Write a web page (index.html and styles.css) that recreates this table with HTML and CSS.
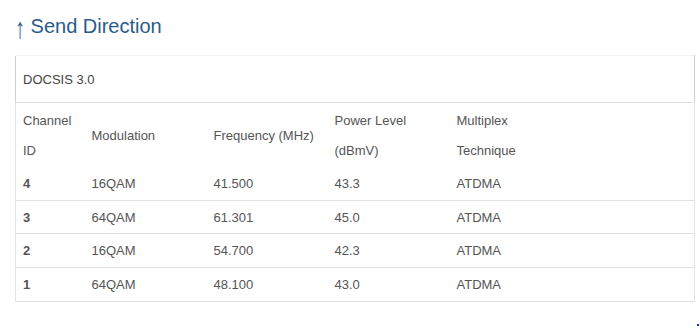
FILE: index.html
```html
<!DOCTYPE html>
<html>
<head>
<meta charset="utf-8">
<link rel="stylesheet" href="styles.css">
</head>
<body>
<div class="page">
  <h2 class="title"><span class="arrow">↑</span> Send Direction</h2>
  <table class="data">
    <colgroup>
      <col class="c1"><col class="c2"><col class="c3"><col class="c4"><col class="c5">
    </colgroup>
    <thead>
      <tr class="caption-row"><th colspan="5">DOCSIS 3.0</th></tr>
      <tr class="head-row">
        <th>Channel<br>ID</th>
        <th>Modulation</th>
        <th>Frequency (MHz)</th>
        <th>Power Level<br>(dBmV)</th>
        <th>Multiplex<br>Technique</th>
      </tr>
    </thead>
    <tbody>
      <tr><td class="id">4</td><td>16QAM</td><td>41.500</td><td>43.3</td><td>ATDMA</td></tr>
      <tr><td class="id">3</td><td>64QAM</td><td>61.301</td><td>45.0</td><td>ATDMA</td></tr>
      <tr><td class="id">2</td><td>16QAM</td><td>54.700</td><td>42.3</td><td>ATDMA</td></tr>
      <tr><td class="id">1</td><td>64QAM</td><td>48.100</td><td>43.0</td><td>ATDMA</td></tr>
    </tbody>
  </table>
</div>
<span class="dot"></span>
</body>
</html>
```
FILE: styles.css
```css
html, body {
  margin: 0;
  padding: 0;
  background: #fff;
}
body {
  font-family: "Liberation Sans", Arial, sans-serif;
  color: #555;
  font-size: 13px;
  width: 700px;
  height: 331px;
  position: relative;
  overflow: hidden;
}
.page {
  padding: 15px 5px 0 15px;
}
.title {
  margin: 0 0 18px 0;
  font-size: 20px;
  font-weight: normal;
  line-height: 22px;
  color: #2b5b8b;
}
.arrow {
  display: inline-block;
  transform: scaleY(1.45) translateY(1px);
}
.data {
  width: 680px;
  border-collapse: collapse;
  table-layout: fixed;
}
.c1 { width: 69px; }
.c2 { width: 122px; }
.c3 { width: 121px; }
.c4 { width: 122px; }
.data th, .data td {
  text-align: left;
  font-weight: normal;
  padding: 0 7px;
  border-left: 1px solid #e4e4e4;
  border-right: 1px solid #e4e4e4;
}
.data th + th, .data td + td {
  border-left: none;
}
.data th:not(:last-child), .data td:not(:last-child) {
  border-right: none;
}
.caption-row th {
  height: 45px;
  line-height: 17px;
  padding-top: 1px;
  border-top: 1px solid #f3f3f3;
  border-bottom: 1px solid #e0e0e0;
  border-left: 1px solid #cfcfcf !important;
  border-right: 1px solid #cfcfcf !important;
  color: #444;
}
.head-row th {
  line-height: 30px;
  padding-top: 3px;
  padding-bottom: 1px;
  vertical-align: middle;
  color: #555;
}
.data td {
  line-height: 16.7px;
  padding-top: 9px;
  padding-bottom: 7px;
  border-bottom: 1px solid #e2e2e2;
}
.data td.id {
  font-weight: bold;
}
.dot {
  position: absolute;
  left: 697px;
  top: 324px;
  width: 2px;
  height: 2px;
  background: #1a2fd0;
}
```
